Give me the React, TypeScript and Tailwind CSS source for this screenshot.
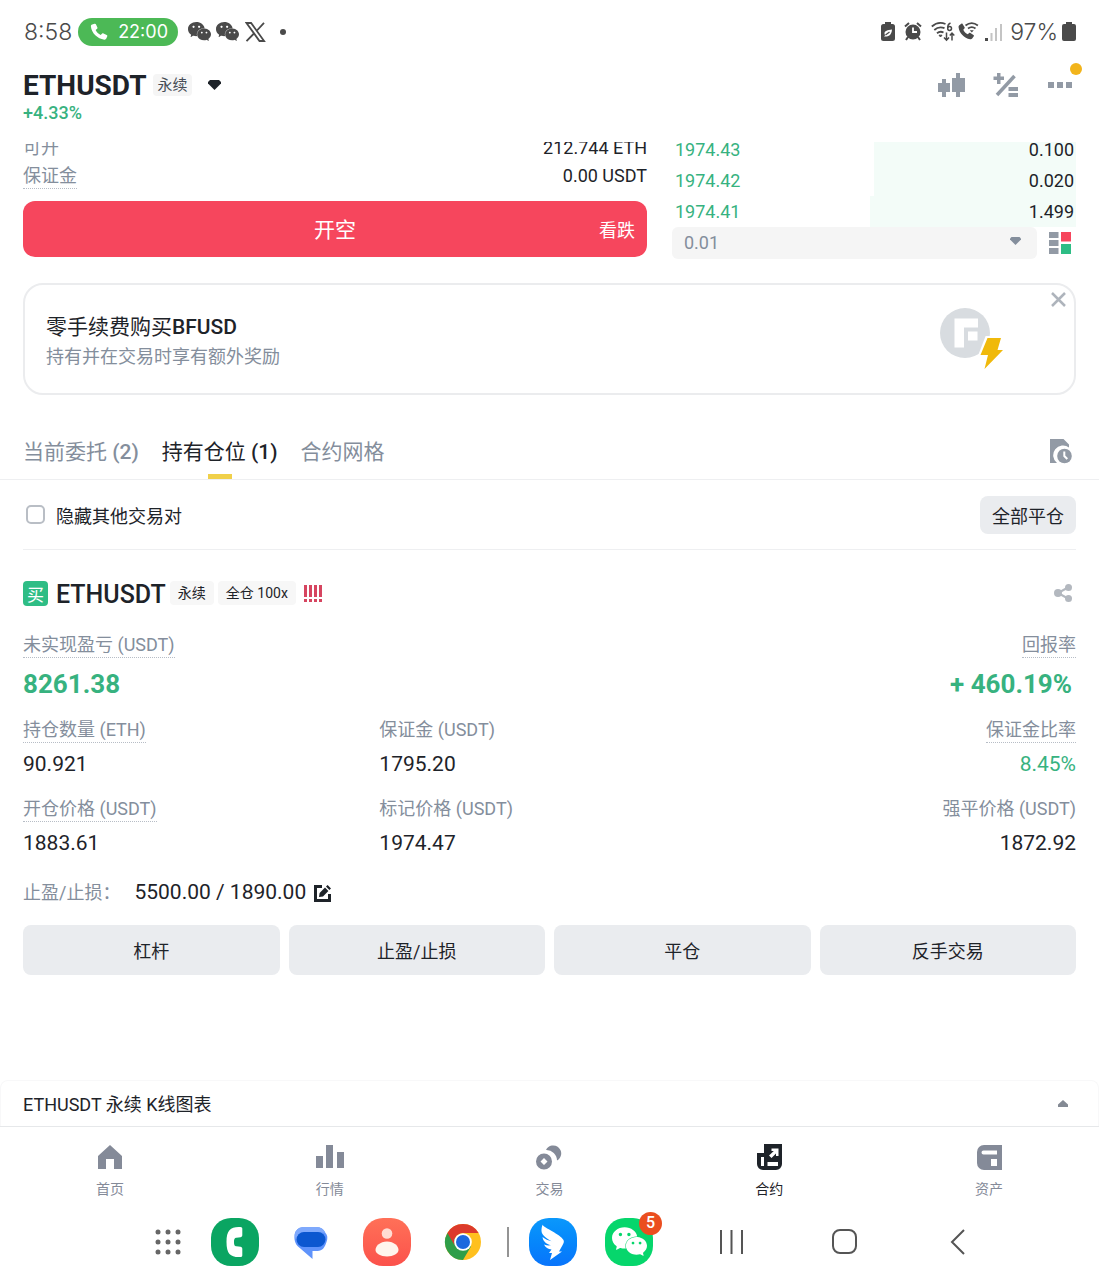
import type { ReactNode } from "react";
import { SiWechat } from "react-icons/si";

const fontClass = "font-[Roboto,'Noto_Sans_CJK_SC',sans-serif]";

function WechatGlyph({ className }: { className: string }) {
  return <SiWechat className={className} aria-hidden="true" />;
}

function StatusBar() {
  return (
    <div className="flex h-[63px] items-center justify-between pr-[23px] pl-6 font-[Inter,sans-serif] text-[#4a4a4a]">
      <div className="flex items-center">
        <span className="w-12 text-[23px] leading-7 font-light">8:58</span>
        <span className="ml-[6px] flex h-7 w-[100px] items-center justify-between rounded-full bg-[#4cb956] pr-[10px] pl-3 text-white">
          <svg width="18" height="18" viewBox="0 0 18 18" fill="#fff" aria-hidden="true">
            <path d="M2.2 1.6 4.6.7c.6-.2 1 0 1.3.6l1.5 3.2c.2.5.1 1-.3 1.3L5.600 7.100c1 2.200 2.900 4 5.100 5l1.500-1.500c.4-.4.8-.4 1.300-.2l3.200 1.500c.6.3.8.7.6 1.300l-1 2.400c-.4.9-1.100 1.200-2 1.100C7.400 15.900 1.700 10.300.9 3.600c-.1-.9.300-1.600 1.300-2Z" />
          </svg>
          <span className="text-lg leading-7">22:00</span>
        </span>
        <WechatGlyph className="ml-[10px] size-[23px]" />
        <WechatGlyph className="ml-[5px] size-[23px]" />
        <svg className="ml-[6px]" width="21" height="20" viewBox="0 0 21 20" fill="none" stroke="#4a4a4a" strokeWidth="1.8" aria-hidden="true">
          <path d="M1.500 1h4.600l13 18h-4.600ZM19 .8 11.500 9M9 11.500 1.500 19.200" />
        </svg>
        <span className="ml-[14px] size-[6px] rounded-full bg-[#4a4a4a]" />
      </div>
      <div className="flex items-center">
        <svg width="14" height="19" viewBox="0 0 14 19" aria-hidden="true">
          <path d="M4 0h6v2h1.500A2.500 2.500 0 0 1 14 4.500v12a2.500 2.500 0 0 1-2.500 2.500h-9A2.500 2.500 0 0 1 0 16.500v-12A2.500 2.500 0 0 1 2.500 2H4Z" fill="#4a4a4a" />
          <path d="M11 7.500c-4.500.3-7.500 1.500-7.500 4 0 .8.300 1.300.7 1.700L3 14.500c3.500.5 7.500-.5 8-7Z" fill="#fff" />
          <path d="M4.500 13 8.500 10" stroke="#4a4a4a" strokeWidth="1.200" />
        </svg>
        <svg className="ml-[9px]" width="18" height="19" viewBox="0 0 18 19" aria-hidden="true">
          <circle cx="9" cy="10" r="7.500" fill="#4a4a4a" />
          <path d="M1 4.500 5 1M17 4.500 13 1M4 15l-2 3M14 15l2 3" stroke="#4a4a4a" strokeWidth="2" />
          <path d="M9 5.500V10h4" fill="none" stroke="#fff" strokeWidth="1.800" />
        </svg>
        <svg className="ml-[9px]" width="24" height="20" viewBox="0 0 24 20" fill="none" stroke="#4a4a4a" strokeWidth="1.800" aria-hidden="true">
          <path d="M.8 4.500C5 .8 10 .2 14.500 2M3.300 8C6.300 5.300 10 4.800 13.500 6.200M6 11.300c2-1.700 4.500-1.900 6.500-.8" />
          <path d="M8 13.200h3L9.500 15Z" fill="#4a4a4a" strokeWidth="1" />
          <path d="M19.500 1c-2.200 1-3 2.700-2.700 5" strokeWidth="1.500" />
          <circle cx="18.600" cy="6.500" r="1.900" strokeWidth="1.500" />
          <path d="M15.500 10.500v7.500M13 15.500l2.500 2.700 2.500-2.700M21 18.500v-7.500M18.800 13.500 21 11l2.300 2.500" strokeWidth="1.500" />
        </svg>
        <svg className="ml-[3px]" width="21" height="19" viewBox="0 0 21 19" aria-hidden="true">
          <path d="M1.300 3.200 3.300 1.700c.5-.3 1-.2 1.300.3l2 3.200c.3.5.2.9-.2 1.300L5.300 7.700c.9 2 2.500 3.600 4.500 4.500l1.300-1.200c.4-.3.900-.4 1.300-.1l3.100 2c.5.3.6.9.3 1.300l-1.600 2.300c-.5.700-1.300.9-2.100.7C6 15.900 1.500 11.300.6 5.400c-.1-.9 0-1.600.7-2.200Z" fill="#4a4a4a" />
          <path d="M7.500 3.500c3.800-3 8.600-3 12.400 0M10 6.500c2.300-1.800 5.200-1.800 7.500 0" fill="none" stroke="#4a4a4a" strokeWidth="1.700" />
          <path d="M11.800 8.200h4l-2 2.300Z" fill="#4a4a4a" />
        </svg>
        <svg className="ml-[6px]" width="18" height="18" viewBox="0 0 18 18" aria-hidden="true">
          <path d="M0 15h3v3H0Z" fill="#4a4a4a" />
          <path d="M5.500 10h2v8h-2ZM10 5h2v13h-2ZM15 1h2v17h-2Z" fill="#c4c4c4" />
        </svg>
        <span className="ml-[7px] text-[23px] leading-7 font-light">97%</span>
        <svg className="ml-[4px]" width="14" height="19" viewBox="0 0 14 19" fill="#4a4a4a" aria-hidden="true">
          <path d="M4 0h6v2h2a2 2 0 0 1 2 2v13a2 2 0 0 1-2 2H2a2 2 0 0 1-2-2V4a2 2 0 0 1 2-2h2Z" />
        </svg>
      </div>
    </div>
  );
}

function Header() {
  return (
    <header className="flex h-[79px] items-start justify-between px-[23px]">
      <div>
        <button type="button" className="flex h-11 items-center">
          <span className="pt-[2px] text-[28px] leading-8 font-bold text-[#1e2329]">ETHUSDT</span>
          <span className="ml-[7px] rounded-sm bg-[#f5f5f5] px-1 text-[15px] leading-[22px] text-[#474d57]">永续</span>
          <svg className="ml-4" width="13" height="10" viewBox="0 0 13 10" fill="#1e2329" aria-hidden="true">
            <path d="M2 0h9l2 2v1.500L6.500 10 0 3.500V2Z" />
          </svg>
        </button>
        <div className="text-lg leading-3 font-medium text-[#37b27f]">+4.33%</div>
      </div>
      <div className="flex h-[43px] items-center">
        <button type="button" aria-label="K线">
          <svg width="27" height="24" viewBox="0 0 27 24" fill="#929aa5" aria-hidden="true">
            <path d="M4 6h4v4h4v9H8v5H4v-5H0v-9h4ZM18 0h4v5h5v14h-5v5h-4v-5h-4V5h4Z" />
          </svg>
        </button>
        <button type="button" aria-label="计算器" className="ml-7">
          <svg width="26" height="24" viewBox="0 0 26 24" aria-hidden="true">
            <path d="M4 0h3.500v3.500H11V7H7.500v4H4V7H.500V3.500H4ZM15.500 14H25v4h-9.500ZM15.500 20H25v4h-9.500Z" fill="#929aa5" />
            <path d="M4 22 21.500 3" stroke="#929aa5" strokeWidth="3.500" />
          </svg>
        </button>
        <button type="button" aria-label="更多" className="relative ml-[29px] py-2">
          <svg width="28" height="6" viewBox="0 0 28 6" fill="#929aa5" aria-hidden="true">
            <path d="M0 0h6v6H0ZM9 0h6v6H9ZM18 0h6v6h-6Z" />
          </svg>
          <span className="absolute -top-[11px] -right-[6px] size-3 rounded-full bg-[#f2b41b]" />
        </button>
      </div>
    </header>
  );
}

const bids = [
  { price: "1974.43", amount: "0.100", depth: 50 },
  { price: "1974.42", amount: "0.020", depth: 50 },
  { price: "1974.41", amount: "1.499", depth: 51 },
];

function OrderPanel() {
  return (
    <section className="overflow-hidden px-[23px]">
      <div className="-mt-2 grid grid-cols-[624fr_404fr] gap-[25px]">
        <div>
          <div className="flex h-7 items-center justify-between text-lg">
            <span className="text-[#848e9c]">可开</span>
            <span className="text-[#1e2329]">212.744 ETH</span>
          </div>
          <div className="flex h-7 items-center justify-between text-lg leading-6">
            <span className="border-b border-dotted border-[#b7bdc6] text-[#848e9c]">保证金</span>
            <span className="text-[#1e2329]">0.00 USDT</span>
          </div>
          <button type="button" className="mt-[11px] grid h-14 w-full grid-cols-[1fr_auto_1fr] items-center rounded-xl bg-[#f6465d] px-3 pt-1 text-white">
            <span />
            <span className="text-[21px]">开空</span>
            <span className="text-right text-lg">看跌</span>
          </button>
        </div>
        <div>
          {bids.map((b) => (
            <div key={b.price} className="relative flex h-[31px] items-center justify-between pr-[2px] pl-[3px] text-lg">
              <span className="absolute inset-y-0 right-0 bg-[#f3fcf8]" style={{ width: `${b.depth}%` }} />
              <span className="relative text-[#37b27f]">{b.price}</span>
              <span className="relative text-[#1e2329]">{b.amount}</span>
            </div>
          ))}
          <div className="flex items-center gap-3 pr-[5px]">
            <div className="relative grow">
              <select aria-label="深度精度" className="block h-8 w-full appearance-none rounded-md bg-[#f5f5f5] px-3 text-lg leading-8 text-[#848e9c]">
                <option>0.01</option>
              </select>
              <svg className="pointer-events-none absolute top-[10px] right-4" width="11" height="8" viewBox="0 0 11 8" fill="#848e9c" aria-hidden="true">
                <path d="M1.500 0h8L11 1.500v1L5.500 8 0 2.500v-1Z" />
              </svg>
            </div>
            <button type="button" aria-label="盘口布局">
              <svg width="22" height="22" viewBox="0 0 22 22" aria-hidden="true">
                <path d="M0 0h9.500v6H0ZM0 8h9.500v6H0ZM0 16h9.500v6H0Z" fill="#929aa5" />
                <path d="M12 0h10v9.500H12Z" fill="#f6465d" />
                <path d="M12 12h10v10H12Z" fill="#2ebd85" />
              </svg>
            </button>
          </div>
        </div>
      </div>
    </section>
  );
}

function Banner() {
  return (
    <section className="relative mx-[23px] mt-6 flex h-28 items-center justify-between rounded-[20px] border-2 border-[#ebecee] pr-[70px] pl-[21px]">
      <div className="pt-1">
        <h2 className="text-[21px] leading-8 text-[#1e2329]">
          零手续费购买<span className="font-medium">BFUSD</span>
        </h2>
        <p className="text-lg leading-7 text-[#848e9c]">持有并在交易时享有额外奖励</p>
      </div>
      <svg width="64" height="64" viewBox="0 0 64 64" aria-hidden="true">
        <circle cx="25" cy="26" r="25" fill="#d8dce0" />
        <path d="M14.500 11.500H38v9H24v20h-9.500ZM28 24.500h9.500v9H28Z" fill="#fff" />
        <path d="M47 31H62L58 43.500h5.500L44.500 64l3-15h-7.500Z" fill="#fff" stroke="#fff" strokeWidth="4" />
        <path d="M47.500 31H61L57.500 43h5.500L44.500 62l3.500-14h-7.500Z" fill="#f0b90b" />
      </svg>
      <button type="button" aria-label="关闭" className="absolute top-[7px] right-2">
        <svg width="15" height="15" viewBox="0 0 15 15" stroke="#aeb4bc" strokeWidth="2.500" aria-hidden="true">
          <path d="m1 1 13 13M14 1 1 14" />
        </svg>
      </button>
    </section>
  );
}

function Tabs() {
  return (
    <div className="mt-7 flex h-[57px] items-stretch border-b border-[#eeeff1] px-[23px]">
      <div role="tablist" className="flex gap-[23px] text-[21px] leading-[58px] text-[#848e9c]">
        <button type="button" role="tab" aria-selected="false">
          当前委托 <span className="font-medium">(2)</span>
        </button>
        <button type="button" role="tab" aria-selected="true" className="relative text-[#1e2329]">
          持有仓位 <span className="font-medium">(1)</span>
          <span className="absolute bottom-0 left-1/2 h-[5px] w-6 -translate-x-1/2 bg-[#f0d04a]" />
        </button>
        <button type="button" role="tab" aria-selected="false">合约网格</button>
      </div>
      <button type="button" aria-label="历史记录" className="mr-1 ml-auto">
        <svg width="22" height="25" viewBox="0 0 22 25" aria-hidden="true">
          <path d="M0 0h13.500L19 5.500V8.500A9.500 9.500 0 0 0 7 24H0Z" fill="#929aa5" />
          <circle cx="14.500" cy="17" r="7.300" fill="#929aa5" />
          <path d="M14.300 12.500V17l3 3" fill="none" stroke="#fff" strokeWidth="2" />
        </svg>
      </button>
    </div>
  );
}

function Label({ text, dotted, right }: { text: string; dotted?: boolean; right?: boolean }) {
  return (
    <div className={right ? "flex justify-end" : "flex"}>
      <span
        className={
          dotted
            ? "border-b border-dotted border-[#b7bdc6] text-lg leading-6 text-[#848e9c]"
            : "border-b border-transparent text-lg leading-6 text-[#848e9c]"
        }
      >
        {text}
      </span>
    </div>
  );
}

const stats = [
  { label: "持仓数量 (ETH)", value: "90.921", dotted: true },
  { label: "保证金 (USDT)", value: "1795.20" },
  { label: "保证金比率", value: "8.45%", dotted: true, green: true },
  { label: "开仓价格 (USDT)", value: "1883.61", dotted: true },
  { label: "标记价格 (USDT)", value: "1974.47" },
  { label: "强平价格 (USDT)", value: "1872.92" },
];

const actions = ["杠杆", "止盈/止损", "平仓", "反手交易"];

function Position() {
  return (
    <article className="px-[23px] pt-[29px] text-[#1e2329]">
      <div className="flex h-7 items-center">
        <span className="flex size-[25px] items-center justify-center rounded-sm bg-[#2ebd85] pt-1 text-[17px] leading-5 text-white">买</span>
        <h3 className="ml-2 pt-1 text-[25px] leading-7 font-medium">ETHUSDT</h3>
        <span className="ml-1 rounded-sm bg-[#f7f7f7] px-2 text-sm leading-6">永续</span>
        <span className="ml-1 rounded-sm bg-[#f7f7f7] px-2 text-sm leading-6">全仓 100x</span>
        <svg className="ml-2" width="18" height="17" viewBox="0 0 18 17" fill="#d64560" aria-hidden="true">
          <path d="M0 0h3v12H0ZM5 0h3v12H5ZM10 0h3v12h-3ZM15 0h3v12h-3ZM0 14h3v3H0ZM5 14h3v3H5ZM10 14h3v3h-3ZM15 14h3v3h-3Z" />
        </svg>
        <button type="button" aria-label="分享" className="mr-1 ml-auto">
          <svg width="18" height="18" viewBox="0 0 18 18" fill="#b3b8bf" aria-hidden="true">
            <path d="m4 9 10-5.500M4 9l10 5.500" stroke="#b3b8bf" strokeWidth="2" />
            <circle cx="4" cy="9" r="4" />
            <circle cx="14.500" cy="3.500" r="3.500" />
            <circle cx="14.500" cy="14.500" r="3.500" />
          </svg>
        </button>
      </div>
      <div className="mt-[26px] flex justify-between">
        <div>
          <Label text="未实现盈亏 (USDT)" dotted />
          <div className="mt-2 text-[26px] leading-9 font-bold text-[#37b27f]">8261.38</div>
        </div>
        <div>
          <Label text="回报率" dotted right />
          <div className="mt-2 pr-1 text-right text-[26px] leading-9 font-bold text-[#37b27f]">+ 460.19%</div>
        </div>
      </div>
      <div className="mt-4 grid grid-cols-3 gap-x-4 gap-y-[19px]">
        {stats.map((s, i) => (
          <div key={s.label} className={i % 3 === 2 ? "text-right" : ""}>
            <Label text={s.label} dotted={s.dotted} right={i % 3 === 2} />
            <div className={s.green ? "mt-[7px] text-[21px] leading-7 text-[#37b27f]" : "mt-[7px] text-[21px] leading-7"}>{s.value}</div>
          </div>
        ))}
      </div>
      <div className="mt-[22px] flex h-7 items-center">
        <span className="text-lg text-[#848e9c]">止盈/止损：</span>
        <span className="ml-[14px] text-[21px]">5500.00 / 1890.00</span>
        <button type="button" aria-label="编辑止盈止损" className="ml-2">
          <svg width="17" height="17" viewBox="0 0 17 17" aria-hidden="true">
            <path d="M8 1.500H1.500v14h14V9" fill="none" stroke="#1e2329" strokeWidth="3" />
            <path d="m5 12 .6-4L11 2.600l3.400 3.400L9 11.400ZM12 1.600 13.600 0 17 3.400 15.400 5Z" fill="#1e2329" />
          </svg>
        </button>
      </div>
      <div className="mt-[18px] grid grid-cols-4 gap-[9px]">
        {actions.map((a) => (
          <button key={a} type="button" className="h-[50px] rounded-lg bg-[#eaecef] pt-1 text-lg">
            {a}
          </button>
        ))}
      </div>
    </article>
  );
}

const navItems: { label: string; icon: ReactNode; active?: boolean }[] = [
  { label: "首页", icon: <path d="M15 2 27 13v13h-8V16h-8v10H3V13Z" /> },
  { label: "行情", icon: <path d="M1 13h7v12H1ZM11 2h7v23h-7ZM22 9h7v16h-7Z" /> },
  {
    label: "交易",
    icon: (
      <>
        <path d="M12 7a8 8 0 1 1 11 10.500A10.500 10.500 0 0 0 12 7Z" />
        <path fillRule="evenodd" d="M10 10.500a8 8 0 1 1 0 16 8 8 0 0 1 0-16Zm0 4.500-3.500 3.500L10 22l3.500-3.500Z" />
      </>
    ),
  },
  {
    label: "合约",
    active: true,
    icon: (
      <path fillRule="evenodd" d="M10 1h18v20a6 6 0 0 1-6 6H9a6 6 0 0 1-6-6V10h7ZM7 14v9h3v-9ZM13.500 19v4H24v-4ZM17.500 5.500v2.500h2.300L15 12.500l2.500 2.500 4.500-4.500V13h2.500V5.500Z" />
    ),
  },
  {
    label: "资产",
    icon: <path fillRule="evenodd" d="M10 2h18v25H10a7 7 0 0 1-7-7V9a7 7 0 0 1 7-7Zm-.5 5.500a2 2 0 0 0 0 4H23v-4ZM17 16v7h6v-7Z" />,
  },
];

function BottomNav() {
  return (
    <nav className="grid h-[78px] grid-cols-5 border-t border-[#e6e8ea] pt-4">
      {navItems.map((n) => (
        <a
          key={n.label}
          href="#"
          className={n.active ? "flex flex-col items-center gap-[6px] text-[#1e2329]" : "flex flex-col items-center gap-[6px] text-[#848a98]"}
        >
          <svg width="30" height="28" viewBox="0 0 30 28" fill="currentColor" aria-hidden="true">
            {n.icon}
          </svg>
          <span className="text-sm leading-6">{n.label}</span>
        </a>
      ))}
    </nav>
  );
}

function Dock() {
  return (
    <div className="flex h-[75px] items-center justify-center gap-[67px] pl-[22px]">
      <div className="flex items-center gap-7">
        <button type="button" aria-label="应用" className="mr-[2px]">
          <svg width="26" height="26" viewBox="0 0 26 26" fill="#666" aria-hidden="true">
            {[3, 13, 23].map((y) => [3, 13, 23].map((x) => <circle key={`${x}-${y}`} cx={x} cy={y} r="2.500" />))}
          </svg>
        </button>
        <button type="button" aria-label="电话" className="flex size-12 items-center justify-center rounded-[20px] bg-[#0aa562]">
          <svg width="48" height="48" viewBox="0 0 48 48" fill="#fff" aria-hidden="true">
            <path d="M29.500 9C20 8.500 15.500 11.500 15.500 24s4.500 15.500 14 15c1.200 0 1.800-.7 1.800-1.800V31c0-1.400-.7-2-1.800-2.200L25.500 28.300c-1.600-.2-2.500-.8-2.500-4.300s.9-4.100 2.500-4.300l4-.5c1.100-.2 1.800-.8 1.800-2.200v-6.200c0-1.100-.6-1.800-1.800-1.800Z" />
          </svg>
        </button>
        <button type="button" aria-label="信息" className="size-12">
          <svg width="48" height="48" viewBox="0 0 48 48" aria-hidden="true">
            <path d="M17 9h12a10 10 0 0 1 9.500 6c2 2 2.500 5 1 9-1.500 5-4 9-9 9h-5v8L10.500 28C7 24 7 18 8 15c1.500-4 5-6 9-6Z" fill="#5f93fb" />
            <path d="M17 9h12a10 10 0 0 1 9.300 5.500H17c-4.500 0-7.500 3.500-7 8C7.500 20 7.500 17 8 15c1.500-4 5-6 9-6Z" fill="#7fa9fc" />
            <rect x="9.500" y="14" width="29" height="15" rx="7.500" fill="#0b57d0" />
          </svg>
        </button>
        <button type="button" aria-label="联系人" className="size-12 rounded-[20px] bg-linear-to-b from-[#ff7058] to-[#fb514b]">
          <svg width="48" height="48" viewBox="0 0 48 48" aria-hidden="true">
            <circle cx="24" cy="15.500" r="5.300" fill="#ffdcd3" />
            <path d="M24 23.500c7 0 11.500 4.500 11.500 8.500 0 3.500-5 6.500-11.500 6.500S12.500 35.500 12.500 32c0-4 4.500-8.500 11.500-8.500Z" fill="#fff5ec" />
          </svg>
        </button>
        <div className="flex items-center gap-5">
          <button type="button" aria-label="Chrome" className="size-12">
            <svg width="48" height="48" viewBox="0 0 48 48" aria-hidden="true">
              <circle cx="24" cy="24" r="18" fill="#ffc01e" />
              <path d="M24 24 8.400 15A18 18 0 0 0 24 42l8-13.500Z" fill="#2f9e48" />
              <path d="M8.400 15a18 18 0 0 1 31.200 0H24a9 9 0 0 0-8 13Z" fill="#dc3a2c" />
              <circle cx="24" cy="24" r="8.800" fill="#fff" />
              <circle cx="24" cy="24" r="7" fill="#1c69de" />
            </svg>
          </button>
          <span className="h-[30px] w-[2px] bg-[#949494]" />
          <button type="button" aria-label="钉钉" className="size-12 rounded-[20px] bg-linear-to-b from-[#0b98fb] to-[#0a74fb]">
            <svg width="48" height="48" viewBox="0 0 48 48" fill="#fff" aria-hidden="true">
              <path d="M13.500 6.500c1 3.500 18 9.500 21 15.500.8 1.700.2 3.200-1 5.300L30 33.500h3L21 42l2-7h-3l2.500-3.500c-3.500-.4-6-1.700-7.500-5 2.500 1 4.500 1 7 .8-5-1.500-8-4-8.500-8.300 3 2.200 5.500 3.500 9 4.300-6-3.300-9.700-6.500-10-10.300-.1-2 .3-4.500 1-6Z" />
            </svg>
          </button>
        </div>
        <button type="button" aria-label="微信" className="relative flex size-12 items-center justify-center rounded-[20px] bg-[#06d66c] text-white">
          <WechatGlyph className="size-[35px]" />
          <span className="absolute -top-[6px] -right-[9px] flex size-[23px] items-center justify-center rounded-full bg-[#eb4e1f] text-base leading-5 font-medium">5</span>
        </button>
      </div>
      <div className="flex items-center gap-[89px]">
        <button type="button" aria-label="最近任务">
          <svg width="23" height="24" viewBox="0 0 23 24" stroke="#555" strokeWidth="2" aria-hidden="true">
            <path d="M1 0v24M11.500 0v24M22 0v24" />
          </svg>
        </button>
        <button type="button" aria-label="主屏幕">
          <svg width="25" height="25" viewBox="0 0 25 25" fill="none" stroke="#555" strokeWidth="2" aria-hidden="true">
            <rect x="1" y="1" width="23" height="23" rx="7" />
          </svg>
        </button>
        <button type="button" aria-label="返回">
          <svg width="20" height="26" viewBox="0 0 20 26" fill="none" stroke="#555" strokeWidth="2" aria-hidden="true">
            <path d="M18 1 6 13l12 12" />
          </svg>
        </button>
      </div>
    </div>
  );
}

export default function App() {
  return (
    <div className={`${fontClass} flex min-h-screen flex-col bg-white`}>
      <StatusBar />
      <Header />
      <main>
        <OrderPanel />
        <Banner />
        <Tabs />
        <div className="mx-[23px] flex h-[70px] items-center justify-between border-b border-[#eeeff1] text-lg text-[#1e2329]">
          <label className="flex items-center">
            <input type="checkbox" className="mr-[11px] ml-[3px] size-[19px] appearance-none rounded-[5px] border-2 border-[#b9bec5] bg-white checked:bg-[#1e2329]" />
            <span className="pt-1">隐藏其他交易对</span>
          </label>
          <button type="button" className="h-[38px] rounded-lg bg-[#eaecef] px-3 pt-1">全部平仓</button>
        </div>
        <Position />
      </main>
      <footer className="mt-auto">
        <button type="button" className="flex h-[46px] w-full items-center justify-between rounded-t-lg border-x border-t border-[#f8f8f9] pr-[30px] pl-[22px] text-lg text-[#1e2329]">
          <span className="pt-[2px]">ETHUSDT 永续 K线图表</span>
          <svg width="10" height="7" viewBox="0 0 10 7" fill="#848a94" aria-hidden="true">
            <path d="M5 0 10 4.500V7H0V4.500Z" />
          </svg>
        </button>
        <BottomNav />
        <Dock />
      </footer>
    </div>
  );
}
